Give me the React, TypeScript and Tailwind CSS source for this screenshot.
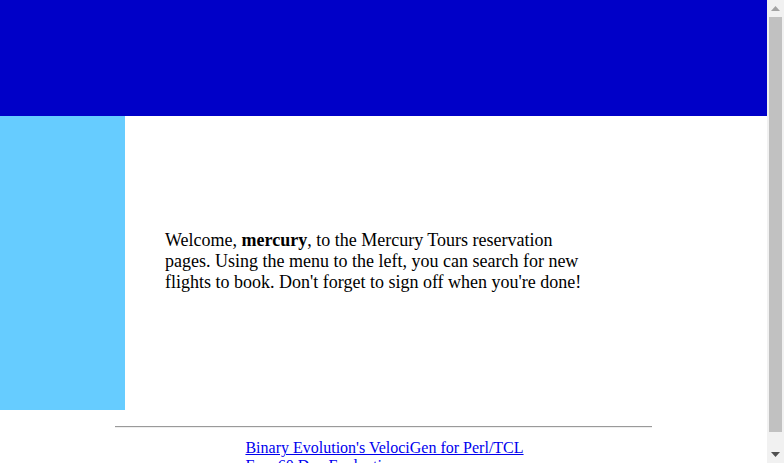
import React from 'react';

const serif = { fontFamily: '"Liberation Serif", "Times New Roman", serif' };

const ScrollBar = () => (
  <div className="flex h-full w-[17px] shrink-0 flex-col bg-[#f1f1f1]">
    <div className="flex h-[17px] items-center justify-center">
      <svg width="9" height="5" viewBox="0 0 9 5">
        <polygon points="4.5,0 9,5 0,5" fill="#a3a3a3" />
      </svg>
    </div>
    <div className="flex flex-1 flex-col px-[2px]">
      <div className="h-[415px] bg-[#c1c1c1]" />
    </div>
    <div className="flex h-[17px] items-center justify-center">
      <svg width="9" height="5" viewBox="0 0 9 5">
        <polygon points="0,0 9,0 4.5,5" fill="#505050" />
      </svg>
    </div>
  </div>
);

const App = () => {
  return (
    <div className="flex h-[463px] overflow-hidden bg-white text-black" style={serif}>
      <div className="flex-1 overflow-hidden">
        <header className="h-[116px] bg-[#0000c8]" />
        <div className="flex h-[294px]">
          <aside className="w-[125px] shrink-0 bg-[#66ccff]" />
          <main className="flex flex-1 items-center pl-10 pb-[3px]">
            <p className="w-[420px] text-[18px] leading-[21px]">
              Welcome, <b>mercury</b>, to the Mercury Tours reservation pages. Using the menu to the left, you can
              search for new flights to book. Don't forget to sign off when you're done!
            </p>
          </main>
        </div>
        <div className="mx-auto mt-[16px] w-[70%] border-t border-t-[#9a9a9a] border-b border-b-[#eeeeee]" />
        <div className="flex justify-center pt-[11px] pl-[2px]">
          <div className="text-[16px] leading-[18px] text-left">
            <a href="#" className="block text-[#0000ee] underline">Binary Evolution's VelociGen for Perl/TCL</a>
            <a href="#" className="block text-[#0000ee] underline">Free 60 Day Evaluation</a>
          </div>
        </div>
      </div>
      <ScrollBar />
    </div>
  );
};

export default App;
